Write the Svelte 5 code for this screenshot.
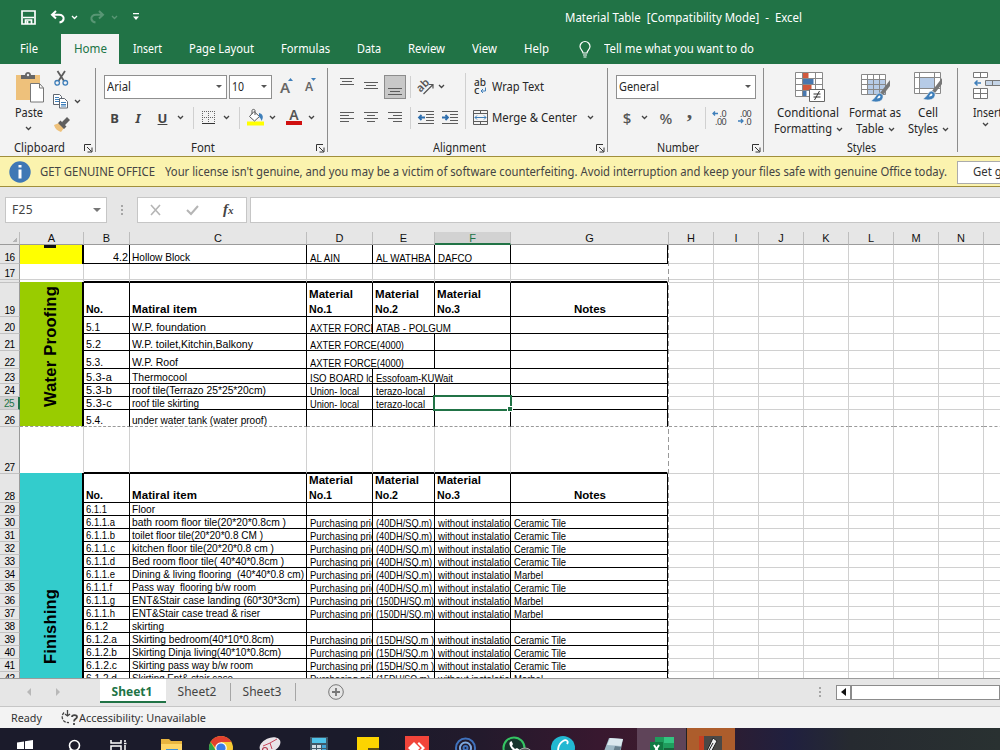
<script lang="ts">
  type Cell = { t: string; w: number; span?: number; right?: boolean } | null;
  type Row = { n: string; h: number; kind?: string; cells: Cell[] };

  // squeeze or stretch a label so it takes exactly the given width
  function fit(node: HTMLElement, width: number) {
    const natural = node.getBoundingClientRect().width;
    const ratio = width / natural;
    if (ratio > 1) {
      node.style.letterSpacing = `${(width - natural) / (node.textContent?.length || 1)}px`;
    } else {
      node.style.transform = `scaleX(${ratio})`;
      node.style.marginRight = `${width - natural}px`;
    }
  }

  function vfit(node: HTMLElement, height: number) {
    const chars = node.textContent?.length || 1;
    const natural = node.getBoundingClientRect().height;
    node.style.letterSpacing = `${(height - natural) / chars}px`;
  }

  const c = (t: string, w: number, span = 1): Cell => ({ t, w, span });

  const tabs = [
    ['Insert', 29], ['Page Layout', 65], ['Formulas', 49], ['Data', 24],
    ['Review', 37], ['View', 25], ['Help', 25]
  ] as [string, number][];

  const columns = ['A', 'B', 'C', 'D', 'E', 'F', 'G', 'H', 'I', 'J', 'K', 'L', 'M', 'N', ''];

  const price = c('Purchasing price', 71);
  const noInstall = c('without instalation', 77);
  const ceramic = c('Ceramic Tile', 52);
  const marbel = c('Marbel', 29);

  function item(n: string, no: string, nw: number, name: string, w: number, cost: string, cw: number, note: Cell): Row {
    return { n, h: 13, cells: [c(no, nw), c(name, w), price, c(cost, cw), noInstall, note] };
  }

  const rows: Row[] = [
    { n: '16', h: 19, cells: [{ t: '4.2', w: 15, right: true }, c('Hollow Block', 58), c('AL AIN', 30), c('AL WATHBA', 55), c('DAFCO', 34), null] },
    { n: '17', h: 16, kind: 'blank', cells: [null, null, null, null, null, null] },
    { n: '', h: 3, kind: 'blank thick', cells: [null, null, null, null, null, null] },
    { n: '19', h: 34, kind: 'head', cells: [] },
    { n: '20', h: 17, cells: [c('5.1', 14), c('W.P. foundation', 74), c('AXTER FORCE(4000)', 94), c('ATAB - POLGUM', 75, 2), null] },
    { n: '21', h: 17, cells: [c('5.2', 15), c('W.P. toilet,Kitchin,Balkony', 121), c('AXTER FORCE(4000)', 94, 2), null, null] },
    { n: '22', h: 18, cells: [c('5.3.', 17), c('W.P. Roof', 46), c('AXTER FORCE(4000)', 94, 2), null, null] },
    { n: '23', h: 15, cells: [c('5.3-a', 26), c('Thermocool', 55), c('ISO BOARD local', 76), c('Essofoam-KUWait', 77, 2), null] },
    { n: '24', h: 13, cells: [c('5.3-b', 26), c('roof tile(Terrazo 25*25*20cm)', 134), c('Union- local', 49), c('terazo-local', 49), null, null] },
    { n: '25', h: 13, kind: 'current', cells: [c('5.3-c', 26), c('roof tile skirting', 67), c('Union- local', 49), c('terazo-local', 49), null, null] },
    { n: '26', h: 17, kind: 'break', cells: [c('5.4.', 17), c('under water tank (water proof)', 135), null, null, null, null] },
    { n: '27', h: 47, kind: 'blank thick', cells: [null, null, null, null, null, null] },
    { n: '28', h: 29, kind: 'head', cells: [] },
    { n: '29', h: 13, cells: [c('6.1.1', 21), c('Floor', 23), null, null, null, null] },
    item('30', '6.1.1.a', 29, 'bath room floor tile(20*20*0.8cm )', 154, '(40DH/SQ.m)', 56, ceramic),
    item('31', '6.1.1.b', 29, 'toilet floor tile(20*20*0.8 CM )', 131, '(40DH/SQ.m)', 56, ceramic),
    item('32', '6.1.1.c', 29, 'kitchen floor tile(20*20*0.8 cm )', 142, '(40DH/SQ.m)', 56, ceramic),
    item('33', '6.1.1.d', 29, 'Bed room floor tile( 40*40*0.8cm )', 152, '(40DH/SQ.m)', 56, ceramic),
    item('34', '6.1.1.e', 29, 'Dining & living flooring  (40*40*0.8 cm)', 172, '(40DH/SQ.m)', 56, marbel),
    item('35', '6.1.1.f', 26, 'Pass way  flooring b/w room', 124, '(40DH/SQ.m)', 56, ceramic),
    item('36', '6.1.1.g', 29, 'ENT&Stair case landing (60*30*3cm)', 168, '(150DH/SQ.m)', 58, marbel),
    item('37', '6.1.1.h', 29, 'ENT&Stair case tread & riser', 128, '(150DH/SQ.m)', 58, marbel),
    { n: '38', h: 13, cells: [c('6.1.2', 22), c('skirting', 32), null, null, null, null] },
    item('39', '6.1.2.a', 31, 'Skirting bedroom(40*10*0.8cm)', 142, '(15DH/SQ.m )', 58, ceramic),
    item('40', '6.1.2.b', 31, 'Skirting Dinja living(40*10*0.8cm)', 149, '(15DH/SQ.m )', 58, ceramic),
    item('41', '6.1.2.c', 31, 'Skirting pass way b/w room', 121, '(15DH/SQ.m )', 58, ceramic),
    item('42', '6.1.2.d', 31, 'Skirting Ent& stair case', 101, '(15DH/SQ.m)', 54, marbel)
  ];

  const widths = [46, 177, 66, 62, 76, 157];

  // column index of every cell once the spans before it are counted
  function place(cells: Cell[]) {
    let col = 0;
    return cells.map((cell) => {
      const span = cell?.span ?? 1;
      let w = 0;
      for (let i = 0; i < span; i++) w += widths[col + i];
      const out = { cell, w, col };
      col += span;
      return out;
    });
  }
</script>

{#snippet chev()}
  <svg class="chev" width="7" height="5" viewBox="0 0 7 5"><path d="M1 1l2.5 2.5L6 1" /></svg>
{/snippet}

{#snippet launcher()}
  <svg class="launcher" width="9" height="9" viewBox="0 0 9 9" fill="none" stroke="#333">
    <path d="M.5 7V.5H7M3 3l4.500 4.500M8 3.500V8H3.500" />
  </svg>
{/snippet}

{#snippet lines(kind: string)}
  <svg width="15" height="11" viewBox="0 0 15 11" stroke="#5c5c5c">
    {#if kind === 'left'}
      <path d="M0 .5h14M0 3.500h9M0 6.500h14M0 9.500h9" />
    {:else if kind === 'center'}
      <path d="M0 .5h14M3 3.500h8M0 6.500h14M3 9.500h8" />
    {:else if kind === 'right'}
      <path d="M0 .5h14M5 3.500h9M0 6.500h14M5 9.500h9" />
    {:else}
      <path d="M0 1.500h14M2 4.500h10M0 7.500h14" />
    {/if}
  </svg>
{/snippet}

{#snippet indent(back: boolean)}
  <svg width="17" height="13" viewBox="0 0 17 13" fill="none" stroke="#5c5c5c">
    <path d="M0 .5h16M8 3.500h8M8 6.500h8M8 9.500h8M0 12.500h16" />
    <path stroke="#2f6fae" stroke-width="1.800" d={back ? 'M7 6.500H1M3.500 4L1 6.500 3.500 9' : 'M0 6.500h6M3.500 4L6 6.500 3.500 9'} />
  </svg>
{/snippet}

{#snippet brush()}
  <path d="M28 4L18 17l3 2 7-9z" fill="#777" />
  <path d="M18 17c-4 0-4 5-9 8 6 2 13 1 12-6z" fill="#3f7fba" stroke="#f3f3f3" stroke-width=".6" />
  <path d="M17.500 19.500c-1 0-2 2-2.500 3 2 0 3.500-1 3.500-2z" fill="#fff" />
{/snippet}

<div class="window">
  <header class="titlebar">
    <div class="quick">
      <svg width="15" height="15" viewBox="0 0 15 15" fill="none" stroke="#fff" stroke-width="1.700">
        <path d="M1 1h13v13H1zM2 7.500h11M4.500 14v-4h6v4M6.500 11v3" />
      </svg>
      <svg width="15" height="14" viewBox="0 0 15 14" fill="none" stroke="#fff" stroke-width="2">
        <path d="M6 1L2 4.800 6 8.500M2 4.800h7c3 0 5 1.500 4.600 4.200C13.300 11 12 12 9.500 12.500" />
      </svg>
      <span class="light">{@render chev()}</span>
      <svg class="faded" width="15" height="14" viewBox="0 0 15 14" fill="none" stroke="#fff" stroke-width="2">
        <path d="M9 1l4 3.800L9 8.500M13 4.800H6C3 4.800 1 6.300 1.400 9c.3 2 1.600 3 4.100 3.500" />
      </svg>
      <span class="light faded">{@render chev()}</span>
      <svg class="more" width="6" height="8" viewBox="0 0 6 8" fill="#fff"><path d="M0 0h6v1.300H0zM0 3.500h6L3 7z" /></svg>
    </div>
    <div class="doc"><span class="t" use:fit={237}>Material Table  [Compatibility Mode]  -  Excel</span></div>
  </header>

  <nav class="tabs">
    <div class="tab file"><span class="t" use:fit={18}>File</span></div>
    <div class="tab home"><span class="t" use:fit={33}>Home</span></div>
    {#each tabs as [name, w]}
      <div class="tab"><span class="t" use:fit={w}>{name}</span></div>
    {/each}
    <div class="tell">
      <svg width="12" height="17" viewBox="0 0 12 17" fill="none" stroke="#fff" stroke-width="1.200">
        <path d="M4 12c0-2.500-3-3.500-3-6.500a5 5 0 0 1 10 0c0 3-3 4-3 6.500zM4 14h4M4.500 16h3" />
      </svg>
      <span class="t" use:fit={150}>Tell me what you want to do</span>
    </div>
  </nav>

  <div class="ribbon">
    <section class="group clipboard">
      <div class="clip-body">
        <div class="paste">
          <svg width="29" height="31" viewBox="0 0 29 31">
            <path d="M0 3h24v25H0z" fill="#eec17b" />
            <path d="M5 7V3h4c0-4 6-4 6 0h4v4z" fill="#666" />
            <circle cx="12" cy="3" r="1.200" fill="#eee" />
            <path d="M14.500 11.500h9l4 4.500v14h-13z" fill="#fff" stroke="#777" />
            <path d="M23.500 11.500V16h4" fill="none" stroke="#777" />
          </svg>
          <span class="t" use:fit={28}>Paste</span>
          {@render chev()}
        </div>
        <div class="clip-tools">
          <svg width="15" height="15" viewBox="0 0 15 15" fill="none">
            <path d="M3.500 0l6.500 10M11 0L4.500 10" stroke="#5c5c5c" stroke-width="1.800" />
            <circle cx="3.200" cy="11.800" r="2.300" stroke="#3f7fba" stroke-width="1.300" />
            <circle cx="11.300" cy="11.800" r="2.300" stroke="#3f7fba" stroke-width="1.300" />
          </svg>
          <div class="copy">
            <svg width="16" height="15" viewBox="0 0 16 15" fill="#fff" stroke="#5f6670">
              <path d="M.5.5h6l2 2v8h-8z" /><path d="M2 3.500h4M2 5.500h4M2 7.500h4" stroke="#3f7fba" />
              <path d="M6.500 4.500h5l3 3v6.500h-8z" /><path d="M8 8.500h5M8 10.500h5M8 12h5" stroke="#3f7fba" />
            </svg>
            {@render chev()}
          </div>
          <svg width="16" height="15" viewBox="0 0 16 15">
            <path d="M0 8l5-2 5 5-3 4C4 14 1 12 0 8z" fill="#eec17b" />
            <path d="M4 6l2.500-2.500 6 6L10 12zM8 5l5-5 3 3-5 5z" fill="#5f5f5f" />
          </svg>
        </div>
      </div>
      <footer><span class="t" use:fit={51}>Clipboard</span>{@render launcher()}</footer>
    </section>

    <section class="group font">
      <div class="row font-top">
        <div class="combo"><span class="t" use:fit={24}>Arial</span><i class="drop"></i></div>
        <div class="combo size"><span class="t" use:fit={12}>10</span><i class="drop"></i></div>
        <div class="grow">A<svg width="5" height="3" viewBox="0 0 5 3"><path d="M0 3h5L2.500 0z" /></svg></div>
        <div class="grow small">A<svg width="5" height="3" viewBox="0 0 5 3"><path d="M0 0h5L2.500 3z" /></svg></div>
      </div>
      <div class="row font-bottom">
        <b class="fmt">B</b>
        <b class="fmt"><em>I</em></b>
        <b class="fmt under">U</b>
        {@render chev()}
        <i class="bar"></i>
        <svg width="13" height="13" viewBox="0 0 13 13" fill="none" stroke="#666">
          <path d="M.5 0v12M6.500 0v12M12.500 0v12M0 .5h13M0 6.500h13" stroke-dasharray="1 1" />
          <path d="M0 12.500h13" stroke="#333" />
        </svg>
        {@render chev()}
        <i class="bar"></i>
        <svg width="17" height="17" viewBox="0 0 17 17">
          <path d="M0 12.500h17v4H0z" fill="#ffff00" />
          <path d="M7 2.500l5.500 5-5 4.500L2.500 7.500z" fill="#fff" stroke="#5c5c5c" />
          <path d="M5 5V1.500c0-1.500 3-1.500 3 0V6" fill="none" stroke="#5c5c5c" />
          <path d="M12 4c4 1 5 4 2.500 8-.5-2-1-3-2.500-4z" fill="#3f7fba" />
        </svg>
        {@render chev()}
        <div class="color">A</div>
        {@render chev()}
      </div>
      <footer><span class="t" use:fit={24}>Font</span>{@render launcher()}</footer>
    </section>

    <section class="group align">
      <div class="align-body">
        <div>
          <div class="row align-row">
            <span class="up">{@render lines('mid')}</span>
            {@render lines('mid')}
            <span class="pressed">{@render lines('mid')}</span>
            <i class="bar"></i>
            <svg width="18" height="16" viewBox="0 0 18 16">
              <text x="0" y="11" font-size="11" transform="rotate(-45 5 8)" fill="#555" font-weight="600">ab</text>
              <path d="M6.500 15l9-9M16 9.500V5.500h-4" fill="none" stroke="#555" stroke-width="1.200" />
            </svg>
            {@render chev()}
          </div>
          <div class="row align-row second">
            {@render lines('left')}
            {@render lines('center')}
            {@render lines('right')}
            <i class="bar"></i>
            {@render indent(true)}
            {@render indent(false)}
          </div>
        </div>
        <i class="bar tall"></i>
        <div>
          <div class="row labelled">
            <svg width="15" height="17" viewBox="0 0 15 17" font-weight="500">
              <text x="1" y="8" font-size="11" textLength="12" lengthAdjust="spacingAndGlyphs" fill="#333">ab</text>
              <text x="1" y="15.500" font-size="11" fill="#333">c</text>
              <path d="M12.500 9.500v3.500H8M10 11l-2 2 2 2" fill="none" stroke="#3f7fba" />
            </svg>
            <span class="t" use:fit={52}>Wrap Text</span>
          </div>
          <div class="row labelled">
            <svg width="15" height="15" viewBox="0 0 15 15" fill="none" stroke="#5c5c5c">
              <path d="M.5.5h14v14H.5zM0 3.500h15M0 11.500h15M7.500 0v3.500M7.500 11.500v3" />
              <path d="M2 7.500h11M4 5.500l-2 2 2 2M11 5.500l2 2-2 2" stroke="#3f7fba" />
            </svg>
            <span class="t" use:fit={85}>Merge & Center</span>
            {@render chev()}
          </div>
        </div>
      </div>
      <footer><span class="t" use:fit={53}>Alignment</span>{@render launcher()}</footer>
    </section>

    <section class="group number">
      <div class="row"><div class="combo"><span class="t" use:fit={40}>General</span><i class="drop"></i></div></div>
      <div class="row number-row">
        <span class="sym">$</span>
        {@render chev()}
        <span class="sym">%</span>
        <b class="comma">,</b>
        <i class="bar"></i>
        <svg width="16" height="15" viewBox="0 0 16 15">
          <text x="7.500" y="6.500" font-size="9">.0</text><text x="3" y="14.500" font-size="9">.00</text>
          <path d="M6 3.500H1M3 1.500l-2 2 2 2" fill="none" stroke="#3f7fba" stroke-width="1.300" />
        </svg>
        <svg width="16" height="15" viewBox="0 0 16 15">
          <text x="3" y="6.500" font-size="9">.00</text><text x="7.500" y="14.500" font-size="9">.0</text>
          <path d="M1 11h5M4 9l2 2-2 2" fill="none" stroke="#3f7fba" stroke-width="1.300" />
        </svg>
      </div>
      <footer><span class="t" use:fit={42}>Number</span>{@render launcher()}</footer>
    </section>

    <section class="group styles">
      <div class="styles-body">
        <div class="big">
          <svg class="cond" width="31" height="31" viewBox="0 0 31 31">
            <path d="M.5.5h27v24H.5z" fill="#fff" />
            <path d="M7.500 1h6v5h-6zM7.500 13h9v5h-9z" fill="#d0583c" /><path d="M7.500 7h11v5h-11zM7.500 19h4v5h-4z" fill="#4777ae" />
            <path d="M.5.5h27v24H.5zM.5 6.500h27M.5 12.500h27M.5 18.500h27M7.500 0v24M20.500 0v24" fill="none" stroke="#888" />
            <path d="M14.500 17.500h15v12h-15z" fill="#fff" stroke="#666" />
            <path d="M18.500 22h7M18.500 25h7M24.500 19l-5 9" stroke="#333" fill="none" />
          </svg>
          <span class="t" use:fit={62}>Conditional</span>
          <div><span class="t" use:fit={58}>Formatting</span>{@render chev()}</div>
        </div>
        <div class="big">
          <svg width="31" height="31" viewBox="0 0 31 31">
            <path d="M1.500 2.500h24v20h-24z" fill="#fff" /><path d="M7.500 7.500h18v15h-18z" fill="#b6cbe6" />
            <path d="M1.500 2.500h24v20h-24zM1.500 7.500h24M1.500 12.500h24M1.500 17.500h24M7.500 2v20M13.500 2v20M19.500 2v20" fill="none" stroke="#888" />
            <g transform="translate(2 4)">{@render brush()}</g>
          </svg>
          <span class="t" use:fit={52}>Format as</span>
          <div><span class="t" use:fit={28}>Table</span>{@render chev()}</div>
        </div>
        <div class="big">
          <svg width="31" height="31" viewBox="0 0 31 31">
            <path d="M1.500.5h26v21h-26z" fill="#fff" /><path d="M7 6h15v10H7z" fill="#b6cbe6" />
            <path d="M1.500.5h26v21h-26zM1.500 5.500h26M1.500 16.500h26M6.500 0v21M21.500 0v21" fill="none" stroke="#888" />
            <g transform="translate(1 2)">{@render brush()}</g>
          </svg>
          <span class="t" use:fit={20}>Cell</span>
          <div><span class="t" use:fit={30}>Styles</span>{@render chev()}</div>
        </div>
      </div>
      <footer><span class="t" use:fit={29}>Styles</span></footer>
    </section>

    <section class="group cells">
      <div class="big">
        <svg width="29" height="31" viewBox="0 0 29 31" fill="#fff" stroke="#777">
          <path d="M.5.5h14v5H.5zM7.500.5v5M.5 16.500h14v10H.5zM.5 21.500h14M7.500 16.500v10" />
          <path d="M12.500 8.500h16v5h-16zM19.500 8v5" fill="#c5d5e8" />
          <path d="M8 11H2M4.500 8.500L2 11l2.500 2.500" fill="none" stroke="#3f7fba" stroke-width="1.500" />
        </svg>
        <span class="t" use:fit={29}>Insert</span>
        <div>{@render chev()}</div>
      </div>
    </section>
  </div>

  <div class="notice">
    <svg width="22" height="22" viewBox="0 0 22 22">
      <circle cx="11" cy="11" r="10.700" fill="#3f78b5" />
      <path d="M9.500 4h3v2.600h-3zM9.500 8.500h3v9h-3z" fill="#fff" />
    </svg>
    <span class="t strong" use:fit={115}>GET GENUINE OFFICE</span>
    <span class="t message" use:fit={782}>Your license isn't genuine, and you may be a victim of software counterfeiting. Avoid interruption and keep your files safe with genuine Office today.</span>
    <button><span class="t" use:fit={100}>Get genuine Office</span></button>
  </div>

  <div class="formula">
    <div class="namebox"><span class="t" use:fit={21}>F25</span><i class="drop"></i></div>
    <span class="dots"><i></i><i></i><i></i></span>
    <div class="fx">
      <svg width="11" height="10" viewBox="0 0 11 10"><path d="M1 0l9 10M10 0L1 10" /></svg>
      <svg width="13" height="10" viewBox="0 0 13 10"><path d="M1 5l4 4 7-8" stroke-width="2" /></svg>
      <em>f<small>x</small></em>
    </div>
    <div class="entry"></div>
  </div>

  <div class="colheads">
    <div class="corner"></div>
    {#each columns as name}
      <div class="colhead" class:selected={name === 'F'}>{name}</div>
    {/each}
  </div>

  <main class="sheet">
    <div class="rowheads">
      {#each rows as row}
        <div class="rowhead" class:selected={row.n === '25'} style:height="{row.h}px"><span>{row.n}</span></div>
      {/each}
    </div>
    <div class="col-a">
      <div class="yellow"></div>
      <div class="gap one"></div>
      <div class="gap two"></div>
      <div class="side green"><span use:vfit={121}>Water Proofing</span></div>
      <div class="gap dash"></div>
      <div class="gap three"></div>
      <div class="side teal"><span use:vfit={75}>Finishing</span></div>
    </div>
    <div class="body">
      {#each rows as row}
        <div class="line {row.kind ?? ''}" style:height="{row.h}px">
          {#if row.kind === 'head'}
            <div class="cell cb"><span class="t" use:fit={17}>No.</span></div>
            <div class="cell cc"><span class="t" use:fit={65}>Matiral item</span></div>
            {#each [1, 2, 3] as n}
              <div class="cell c{n}"><span class="t" use:fit={44}>Material</span><span class="t" use:fit={23}>No.{n}</span></div>
            {/each}
            <div class="cell cg"><span class="t" use:fit={32}>Notes</span></div>
          {:else}
            {#each place(row.cells) as { cell, w, col }}
              <div class="cell" class:fine={col > 1} class:right={cell?.right} class:active={row.n === '25' && col === 4} style:width="{w}px">
                {#if cell}<span class="t" use:fit={cell.w}>{cell.t}</span>{/if}
              </div>
            {/each}
          {/if}
        </div>
      {/each}
    </div>
    <div class="pagebreak"></div>
    <div class="empty">
      {#each rows as row}
        <div class="line {row.kind ?? ''}" style:height="{row.h}px">
          {#each Array(8) as _}<div class="cell"></div>{/each}
        </div>
      {/each}
    </div>
  </main>

  <div class="sheets">
    <i class="nav prev"></i>
    <i class="nav next"></i>
    <div class="sheet-tab on"><span class="t" use:fit={41}>Sheet1</span></div>
    <div class="sheet-tab"><span class="t" use:fit={39}>Sheet2</span></div>
    <div class="sheet-tab"><span class="t" use:fit={39}>Sheet3</span></div>
    <svg class="plus" width="16" height="16" viewBox="0 0 16 16" fill="none" stroke="#777">
      <circle cx="8" cy="8" r="7.300" /><path d="M8 4v8M4 8h8" stroke-width="1.800" />
    </svg>
    <span class="dots"><i></i><i></i><i></i></span>
    <div class="scroll"><i></i></div>
  </div>

  <div class="status">
    <span class="t" use:fit={31}>Ready</span>
    <svg width="17" height="15" viewBox="0 0 17 15" fill="none" stroke="#444" stroke-width="1.300">
      <path d="M3 2.500C-1 7 2 13 8 12.500" stroke-dasharray="3 1.200" /><path d="M6.500 0v6M4 4l2.500 2L9 4" /><path d="M11 7c0-2.500 5-2.500 5 0 0 2-3 1.500-3 4.500M13 13v2" stroke-width="1.800" />
    </svg>
    <span class="t" use:fit={127}>Accessibility: Unavailable</span>
  </div>

  <div class="taskbar">
    <div class="app"><svg viewBox="0 0 24 24"><path d="M4 6.500l7-1V13H4zM12 5.300L20 4v9h-8zM4 14h7v7H4zM12 14h8v8h-8z" fill="#fff" /></svg></div>
    <div class="app"><svg viewBox="0 0 24 24" fill="none" stroke="#fff" stroke-width="1.600"><circle cx="12.500" cy="9.500" r="5" /><path d="M9 13l-4.500 6" /></svg></div>
    <div class="app task"><svg viewBox="0 0 24 24" fill="none" stroke="#fff" stroke-width="1.500"><path d="M2 4v3h10V4M2 17v-7h10v7zM16 4v2M16 9v10M15 7.500h2.500" /></svg></div>
    <div class="app"><svg viewBox="0 0 24 24"><path d="M1 3h8l2 2h11v15H1z" fill="#e9b53f" /><path d="M1 8h21v12H1z" fill="#ffd667" /><path d="M6 13h12v6H6z" fill="#3d8fd6" /></svg></div>
    <div class="app"><svg viewBox="0 0 24 24"><circle cx="12" cy="12" r="12" fill="#f7c934" /><path d="M1.600 6a12 12 0 0 1 20.800 0H12v12z" fill="#e2402f" /><path d="M1.600 6A12 12 0 0 0 12 24l4-8-9-1z" fill="#2da04e" /><circle cx="12" cy="12" r="5.800" fill="#fff" /><circle cx="12" cy="12" r="4.600" fill="#3c7de6" /></svg></div>
    <div class="app"><svg viewBox="0 0 24 24"><ellipse cx="12" cy="9" rx="11" ry="7" fill="#e9e4e8" transform="rotate(-25 12 9)" /><path d="M5 10l7-3 7-4M12 7l2 6" stroke="#c8475c" fill="none" /><circle cx="7" cy="14" r="2.500" fill="none" stroke="#b33a4c" stroke-width="1.200" /></svg></div>
    <div class="app"><svg viewBox="0 0 24 24"><path d="M3 1h18v22H3z" fill="#3f5868" /><path d="M5 2h14v5H5z" fill="#4fc3ea" /><path d="M5 9h4v3H5zM10 9h4v3h-4zM5 13h4v3H5zM10 13h4v3h-4z" fill="#cfdce5" /><path d="M15 9h4v3h-4zM15 13h4v3h-4z" fill="#43a6d8" /></svg></div>
    <div class="app"><svg viewBox="0 0 24 24"><path d="M1 1h22v22H1z" fill="#fcd400" /><path d="M12 12h11v11H12z" fill="#5b4c16" /></svg></div>
    <div class="app"><svg viewBox="0 0 24 24"><path d="M0 0h24v24H0z" fill="#f1443a" /><path d="M9 6l6 6-6 6-6-6z" fill="#fff" /><path d="M14 6l6 6-6 6-1.500-1.500L17 12l-4.500-4.500z" fill="#fff" /></svg></div>
    <div class="app"><svg viewBox="0 0 24 24" fill="none" stroke="#3f72bd" stroke-width="2"><circle cx="11.500" cy="12" r="9.500" /><circle cx="11.500" cy="12" r="5.500" stroke="#7fa9df" /><circle cx="11.500" cy="12" r="2" /></svg></div>
    <div class="app"><svg viewBox="0 0 24 24"><circle cx="11" cy="12" r="10.500" fill="#17352c" stroke="#35c463" stroke-width="2" /><path d="M7 6c-2 3 2 9 8 11l2-3-3-2-2 1-3-3 1-2-1.500-3z" fill="#fff" /><circle cx="22" cy="20" r="8" fill="#555a5c" stroke="#aaa" /></svg></div>
    <div class="app"><svg viewBox="0 0 24 24"><circle cx="11" cy="12" r="12" fill="#22b8d2" /><path d="M11 24a12 12 0 0 0 11-8c-3-3-8 1-11 8z" fill="#3c7be0" /><path d="M15 8c2-3-1-5-4-3-5 3-7 12-2 13 3 .5 5-1 7-3" fill="none" stroke="#fff" stroke-width="1.800" /></svg></div>
    <div class="app"><svg viewBox="0 0 24 24"><path d="M8 2l14 1-4 20H0z" fill="#9fb9c6" /><path d="M9 2l13 1-2 7L6 9z" fill="#dce9ef" /><path d="M14 10l6 1-3 12h-7z" fill="#68818e" /></svg></div>
    <div class="app excel"><svg viewBox="0 0 24 24"><path d="M5 1h19v22H5z" fill="#1f9d5d" /><path d="M14 1h10v6H14z" fill="#33c481" /><path d="M14 12h10v11H14z" fill="#17663d" /><path d="M0 6h13v14H0z" fill="#117a43" /><path d="M4 9l5 8M9 9l-5 8" stroke="#fff" stroke-width="2" /></svg></div>
    <div class="app pen"><svg viewBox="0 0 24 24"><path d="M0 0h23v24H0z" fill="#4b4846" /><path d="M0 0h5v24H0z" fill="#c43f22" /><path d="M14 2l4 3-8 15-4 2 1-5z" fill="#eee" stroke="#222" /><path d="M14 7l-5 9" stroke="#222" /></svg></div>
  </div>
</div>

<style>
  :global(body) {
    overflow: hidden;
  }

  .window {
    width: 1000px;
    height: 750px;
    overflow: hidden;
    display: flex;
    flex-direction: column;
    background: #e6e6e6;
    font-family: "Noto Sans", "Open Sans", sans-serif;
    font-size: 12px;
    line-height: 16px;
    color: #262626;
  }

  .window > :global(*) {
    flex-shrink: 0;
  }

  svg {
    display: block;
    flex-shrink: 0;
    overflow: visible;
  }

  .t {
    display: inline-block;
    white-space: pre;
    flex-shrink: 0;
    transform-origin: 0 50%;
  }

  /* title and tabs */
  .titlebar {
    height: 34px;
    display: flex;
    align-items: center;
    background: #217346;
    color: #fff;
  }

  .quick {
    display: flex;
    align-items: center;
    width: 565px;
    padding-left: 21px;
    box-sizing: border-box;
  }

  .quick svg:nth-of-type(2) {
    margin-left: 14px;
  }

  .quick .light {
    margin: 0 12px 0 6px;
  }

  .light :global(.chev path) {
    stroke: #fff;
  }

  .faded {
    opacity: 0.25;
  }

  .quick .more {
    margin-left: 3px;
  }

  .doc {
    padding-top: 2px;
  }

  .tabs {
    height: 30px;
    display: flex;
    align-items: stretch;
    background: #217346;
    color: #fff;
  }

  .tab {
    display: flex;
    align-items: center;
    padding: 0 13.5px;
  }

  .tab.file {
    margin: 0 9.5px 0 6.5px;
  }

  .tab.home {
    width: 58px;
    padding: 0;
    justify-content: center;
    background: #f3f3f3;
    color: #217346;
  }

  .tell {
    display: flex;
    align-items: center;
    gap: 13px;
    margin-left: 17px;
  }

  /* ribbon */
  .ribbon {
    height: 93px;
    box-sizing: border-box;
    display: flex;
    background: #f3f3f3;
    border-bottom: 1px solid #a08f3c;
  }

  .group {
    position: relative;
    box-sizing: border-box;
    flex-shrink: 0;
    display: grid;
    grid-template-rows: 31px 31px 30px;
    align-content: start;
    padding-top: 7px;
    height: 92px;
  }

  .group::after {
    content: "";
    position: absolute;
    right: 0;
    top: 4px;
    width: 1px;
    height: 84px;
    background: #8c8c8c;
  }

  .cells::after {
    display: none;
  }

  .clipboard {
    width: 96px;
  }

  .font {
    width: 232px;
  }

  .align {
    width: 280px;
  }

  .number {
    width: 156px;
  }

  .styles {
    width: 194px;
  }

  .cells {
    width: 100px;
    padding-left: 15px;
    justify-content: start;
  }

  .group footer {
    grid-row: 3;
    position: relative;
    display: flex;
    justify-content: center;
    align-items: center;
    height: 30px;
  }

  .clipboard footer,
  .align footer,
  .number footer {
    padding-right: 17px;
  }

  .font footer {
    padding-right: 18px;
  }

  .group footer :global(.launcher) {
    position: absolute;
    right: 3px;
    top: 11px;
  }

  .chev path {
    fill: none;
    stroke: #444;
    stroke-width: 1.3;
  }

  .row {
    display: flex;
    align-items: center;
    height: 31px;
  }

  .bar {
    width: 1px;
    height: 22px;
    background: #d0d0d0;
  }

  .bar.tall {
    height: 56px;
    margin: 2px 8px 0 3px;
  }

  .clip-body,
  .align-body,
  .styles-body {
    grid-row: 1 / 3;
    display: flex;
  }

  .paste {
    display: flex;
    flex-direction: column;
    align-items: center;
    width: 31px;
    margin: 1px 0 0 13px;
  }

  .paste svg {
    margin-left: 4px;
  }

  .paste .t {
    margin: 2px 0 5px;
  }

  .paste :global(.chev) {
    margin-left: -1px;
  }

  .clip-tools {
    display: flex;
    flex-direction: column;
    gap: 8px;
    margin-left: 10px;
  }

  .copy {
    display: flex;
    align-items: center;
    gap: 5px;
  }

  .copy > svg:first-child {
    margin-left: -1px;
  }

  .combo,
  .namebox {
    box-sizing: border-box;
    display: flex;
    align-items: center;
    justify-content: space-between;
    background: #fff;
    border: 1px solid #8f8f8f;
    width: 123px;
    height: 24px;
    padding: 0 4px 0 2px;
  }

  .combo.size {
    width: 43px;
    margin-left: 2px;
  }

  .number .combo {
    width: 140px;
    margin-left: 8px;
  }

  .drop {
    border: 3px solid transparent;
    border-top-color: #555;
    border-bottom: 0;
  }

  .font-top {
    padding-left: 8px;
  }

  .grow {
    display: flex;
    font-size: 15px;
    font-weight: 600;
    color: #666;
    margin-left: 8px;
  }

  .grow svg {
    fill: #3f7fba;
    margin-top: -1px;
    margin-left: -2px;
  }

  .grow.small {
    font-size: 12px;
    margin-left: 12px;
  }

  .font-bottom,
  .align-row,
  .number-row {
    display: grid;
    justify-items: center;
  }

  .font-bottom {
    padding-left: 13px;
    grid-template-columns: 11px 36px 13px 22px 4px 27px 8px 18px 14px 20px 24px 10px;
  }

  .fmt {
    font-size: 13px;
    color: #444;
  }

  .under {
    text-decoration: underline;
  }

  .color {
    width: 16px;
    height: 12px;
    line-height: 11px;
    margin-top: -1px;
    text-align: center;
    font-size: 14px;
    font-weight: 600;
    color: #555;
    border-bottom: 4px solid #d01010;
  }

  .align-row {
    padding-left: 7px;
    grid-template-columns: 24px 24px 24px 7px 24px 7px;
  }

  .align-row.second {
    grid-template-columns: 24px 24px 24px 7px 24px 24px;
  }

  .up {
    margin-top: -8px;
  }

  .pressed {
    box-sizing: border-box;
    width: 22px;
    height: 24px;
    padding: 11px 0 0 3px;
    background: #c8c8c8;
    border: 1px solid #8c8c8c;
  }

  .labelled {
    gap: 4px;
    margin-left: -1px;
  }

  .labelled :global(.chev) {
    margin-left: 6px;
  }

  .number-row {
    padding-left: 8px;
    grid-template-columns: 22px 12px 32px 15px 16px 14px 35px;
  }

  .sym {
    font-size: 15px;
    font-weight: 500;
    color: #555;
  }

  .comma {
    font: bold 22px/16px "Liberation Serif", serif;
    color: #555;
    margin-top: -13px;
  }

  .number-row text {
    fill: #444;
    letter-spacing: -0.5px;
  }

  .styles-body {
    display: grid;
    grid-template-columns: 80px 54px 52px;
    padding-left: 4px;
  }

  .big {
    display: flex;
    flex-direction: column;
    align-items: center;
    padding-top: 1px;
  }

  .big .cond {
    margin-left: 4px;
  }

  .big > .t {
    margin-top: 2px;
  }

  .big > div {
    display: flex;
    align-items: center;
    gap: 4px;
    height: 16px;
  }

  .cells .big > div {
    padding: 1px 5px 0 0;
    height: 24px;
  }

  /* licence notice */
  .notice {
    height: 30px;
    box-sizing: border-box;
    display: flex;
    align-items: center;
    padding: 1px 0 0 9px;
    background: #fbf3ae;
    border-bottom: 1px solid #a08f3c;
    color: #444;
    font-size: 12px;
  }

  .notice .strong {
    margin-left: 9px;
  }

  .notice .message {
    margin-left: 10px;
  }

  .notice button {
    flex-shrink: 0;
    height: 23px;
    margin-left: 10px;
    padding: 0 15px;
    border: 1px solid #ababab;
    background: #fff;
    color: #333;
    font: inherit;
  }

  /* formula bar */
  .formula {
    height: 45px;
    box-sizing: border-box;
    display: flex;
    align-items: center;
    padding: 0 0 0 5px;
  }

  .namebox {
    width: 102px;
    height: 26px;
    padding: 0 5px 0 6px;
    border-color: #c6c6c6;
    color: #444;
  }

  .namebox .drop {
    border-width: 4px 4px 0;
    border-top-color: #777;
  }

  .dots {
    display: flex;
    flex-direction: column;
    gap: 2px;
    margin: 0 14px;
  }

  .dots i {
    width: 2px;
    height: 2px;
    background: #a6a6a6;
  }

  .fx,
  .entry {
    box-sizing: border-box;
    height: 26px;
    background: #fff;
    border: 1px solid #c6c6c6;
  }

  .fx {
    width: 110px;
    display: flex;
    align-items: center;
    padding-left: 12px;
    gap: 25px;
  }

  .fx svg {
    fill: none;
    stroke: #b5b5b5;
    stroke-width: 1.6;
  }

  .fx em {
    margin-left: -1px;
    font: italic 600 15px "Liberation Serif", serif;
    color: #444;
  }

  .fx small {
    font-size: 11px;
  }

  .entry {
    flex: 1;
    margin-left: 3px;
    border-right: 0;
  }

  /* sheet */
  .colheads {
    display: grid;
    grid-template-columns: 20px 64px 46px 177px 66px 62px 76px 158px repeat(7, 45px) 17px;
    height: 13px;
    font: 11px/13px "Liberation Sans", Arial, sans-serif;
    color: #111;
    overflow: hidden;
  }

  .colhead,
  .corner {
    text-align: center;
    border-right: 1px solid #bdbdbd;
    border-bottom: 1px solid #9b9b9b;
    height: 12px;
  }

  .corner {
    background: linear-gradient(135deg, transparent 60%, #b5b5b5 60%) 11px 4px / 6px 6px no-repeat;
  }

  .colhead.selected {
    height: 11px;
    background: #d2d2d2;
    color: #217346;
    border-bottom: 2px solid #217346;
  }

  .sheet {
    display: flex;
    height: 433px;
    overflow: hidden;
    background: #fff;
    font: 11px/12px "Liberation Sans", Arial, sans-serif;
    color: #000;
  }

  .rowheads {
    flex-shrink: 0;
  }

  .rowhead {
    box-sizing: border-box;
    width: 20px;
    display: flex;
    align-items: flex-end;
    justify-content: center;
    background: #e6e6e6;
    border-right: 1px solid #9b9b9b;
    border-bottom: 1px solid #c2c2c2;
    font-size: 10px;
    line-height: 11px;
    letter-spacing: -0.5px;
  }

  .rowhead.selected {
    background: #d2d2d2;
    color: #217346;
    border-right: 2px solid #217346;
  }

  .col-a {
    width: 64px;
    flex-shrink: 0;
  }

  .col-a > div {
    box-sizing: border-box;
    border-right: 1px solid #d0d0d0;
  }

  .col-a .yellow {
    height: 19px;
    background: #ff0;
    border-right: 2px solid #000;
  }

  .yellow::before {
    content: "";
    display: block;
    width: 12px;
    height: 3px;
    margin-left: 24px;
    background: #111;
  }

  .one {
    height: 16px;
    border-bottom: 1px solid #d0d0d0;
  }

  .two {
    height: 2px;
  }

  .dash {
    height: 1px;
    border-bottom: 1px dashed #999;
  }

  .three {
    height: 46px;
  }

  .col-a .side {
    display: flex;
    justify-content: center;
    border-right: 2px solid #000;
    font-size: 16.5px;
    font-weight: bold;
    line-height: 20px;
  }

  .side span {
    writing-mode: vertical-rl;
    transform: rotate(180deg);
    white-space: pre;
    align-self: flex-start;
    margin-right: 2px;
  }

  .green {
    height: 144px;
    background: #99cc00;
    padding-top: 4px;
  }

  .teal {
    height: 220px;
    background: #33cccc;
    padding-top: 116px;
  }

  .body {
    width: 584px;
    flex-shrink: 0;
  }

  .line {
    display: flex;
  }

  .cell {
    box-sizing: border-box;
    flex-shrink: 0;
    position: relative;
    display: flex;
    align-items: flex-end;
    padding-left: 2px;
    overflow: hidden;
    border-right: 1px solid #000;
    border-bottom: 1px solid #000;
  }

  .fine {
    font-size: 10.5px;
    padding-left: 3px;
  }

  .fine .t {
    margin-bottom: -1px;
  }

  .cell.right {
    justify-content: flex-end;
    padding-right: 1px;
  }

  .blank .cell {
    border-color: #d0d0d0;
  }

  .body .blank .cell:last-child {
    border-right-color: transparent;
  }

  .body .thick .cell {
    border-bottom: 2px solid #000;
  }

  .break .cell {
    border-bottom: 1px dashed #999;
  }

  .head {
    font-size: 11.5px;
    font-weight: bold;
    line-height: 15px;
  }

  .head .cell {
    flex-direction: column;
    justify-content: flex-end;
    align-items: flex-start;
  }

  .head .cell .t:last-child {
    margin-bottom: -1px;
  }

  .cb {
    width: 46px;
  }

  .cc {
    width: 177px;
  }

  .c1 {
    width: 66px;
  }

  .c2 {
    width: 62px;
  }

  .c3 {
    width: 76px;
  }

  .head .cg {
    width: 157px;
    align-items: center;
  }

  .cell.active {
    overflow: visible;
    z-index: 1;
  }

  .active::before {
    content: "";
    position: absolute;
    inset: -2px;
    border: 2px solid #217346;
  }

  .active::after {
    content: "";
    position: absolute;
    right: -3px;
    bottom: -3px;
    width: 4px;
    height: 4px;
    background: #217346;
    border: 1px solid #fff;
  }

  .pagebreak {
    width: 1px;
    flex-shrink: 0;
    background: repeating-linear-gradient(#999 0 5px, transparent 5px 8px);
  }

  .empty {
    width: 360px;
    flex-shrink: 0;
  }

  .empty .cell {
    width: 45px;
    border-color: #d0d0d0;
  }

  .empty .break .cell {
    border-bottom-color: #999;
  }

  /* sheet tabs */
  .sheets {
    height: 29px;
    box-sizing: border-box;
    display: flex;
    border-top: 1px solid #9b9b9b;
    border-bottom: 1px solid #c6c6c6;
    color: #444;
    overflow: hidden;
  }

  .nav {
    border: 4px solid transparent;
    height: 0;
    margin-top: 9px;
  }

  .prev {
    margin-left: 23px;
    border-right-color: #b8b8b8;
  }

  .next {
    margin-left: 25px;
    margin-right: 36px;
    border-left-color: #b8b8b8;
  }

  .sheet-tab {
    box-sizing: border-box;
    display: flex;
    align-items: center;
    justify-content: center;
    width: 65px;
    height: 18px;
    margin-top: 4px;
    padding-right: 2px;
    border-right: 1px solid #a6a6a6;
  }

  .sheet-tab.on {
    width: 66px;
    height: 24px;
    margin-top: 0;
    padding: 3px 2px 0 0;
    background: #fff;
    color: #217346;
    font-weight: bold;
    border-right: 0;
    border-bottom: 2px solid #217346;
  }

  .plus {
    margin: 5px 0 0 32px;
  }

  .sheets .dots {
    margin: 8px 15px 0 475px;
    gap: 2px;
  }

  .scroll {
    flex: 1;
    box-sizing: border-box;
    height: 15px;
    margin-top: 6px;
    border: 1px solid #8c8c8c;
    background: linear-gradient(90deg, #fff 13px, #8c8c8c 13px 15px, #fff 15px);
  }

  .scroll i {
    display: block;
    width: 0;
    border: 4px solid transparent;
    border-right: 5px solid #111;
    border-left: 0;
    margin: 2px 0 0 4px;
  }

  .status {
    height: 21px;
    display: flex;
    align-items: center;
    padding: 0 0 0 11px;
    background: #f3f3f3;
    color: #333;
    font-size: 11px;
  }

  .status svg {
    margin: 0 1px 0 19px;
  }

  .taskbar {
    height: 22px;
    display: flex;
    overflow: hidden;
    background: linear-gradient(90deg, #1b1b2b 0, #1b1b2b 380px, #231a2c 480px, #38182f 600px, #3b1a2e 640px, #2b1d33 735px, #20203f 790px, #262a30 850px, #293131 1000px);
  }

  .app {
    flex-shrink: 0;
    width: 49px;
    height: 22px;
    display: flex;
    justify-content: center;
    align-items: flex-start;
    overflow: hidden;
  }

  .app svg {
    width: 24px;
    height: 24px;
    margin-top: 8px;
  }

  .task svg {
    margin-left: -3px;
  }

  .excel {
    background: #5f4459;
  }

  .pen {
    background: #ad5d2c;
    box-shadow: inset 1px 0 #222;
  }
</style>
